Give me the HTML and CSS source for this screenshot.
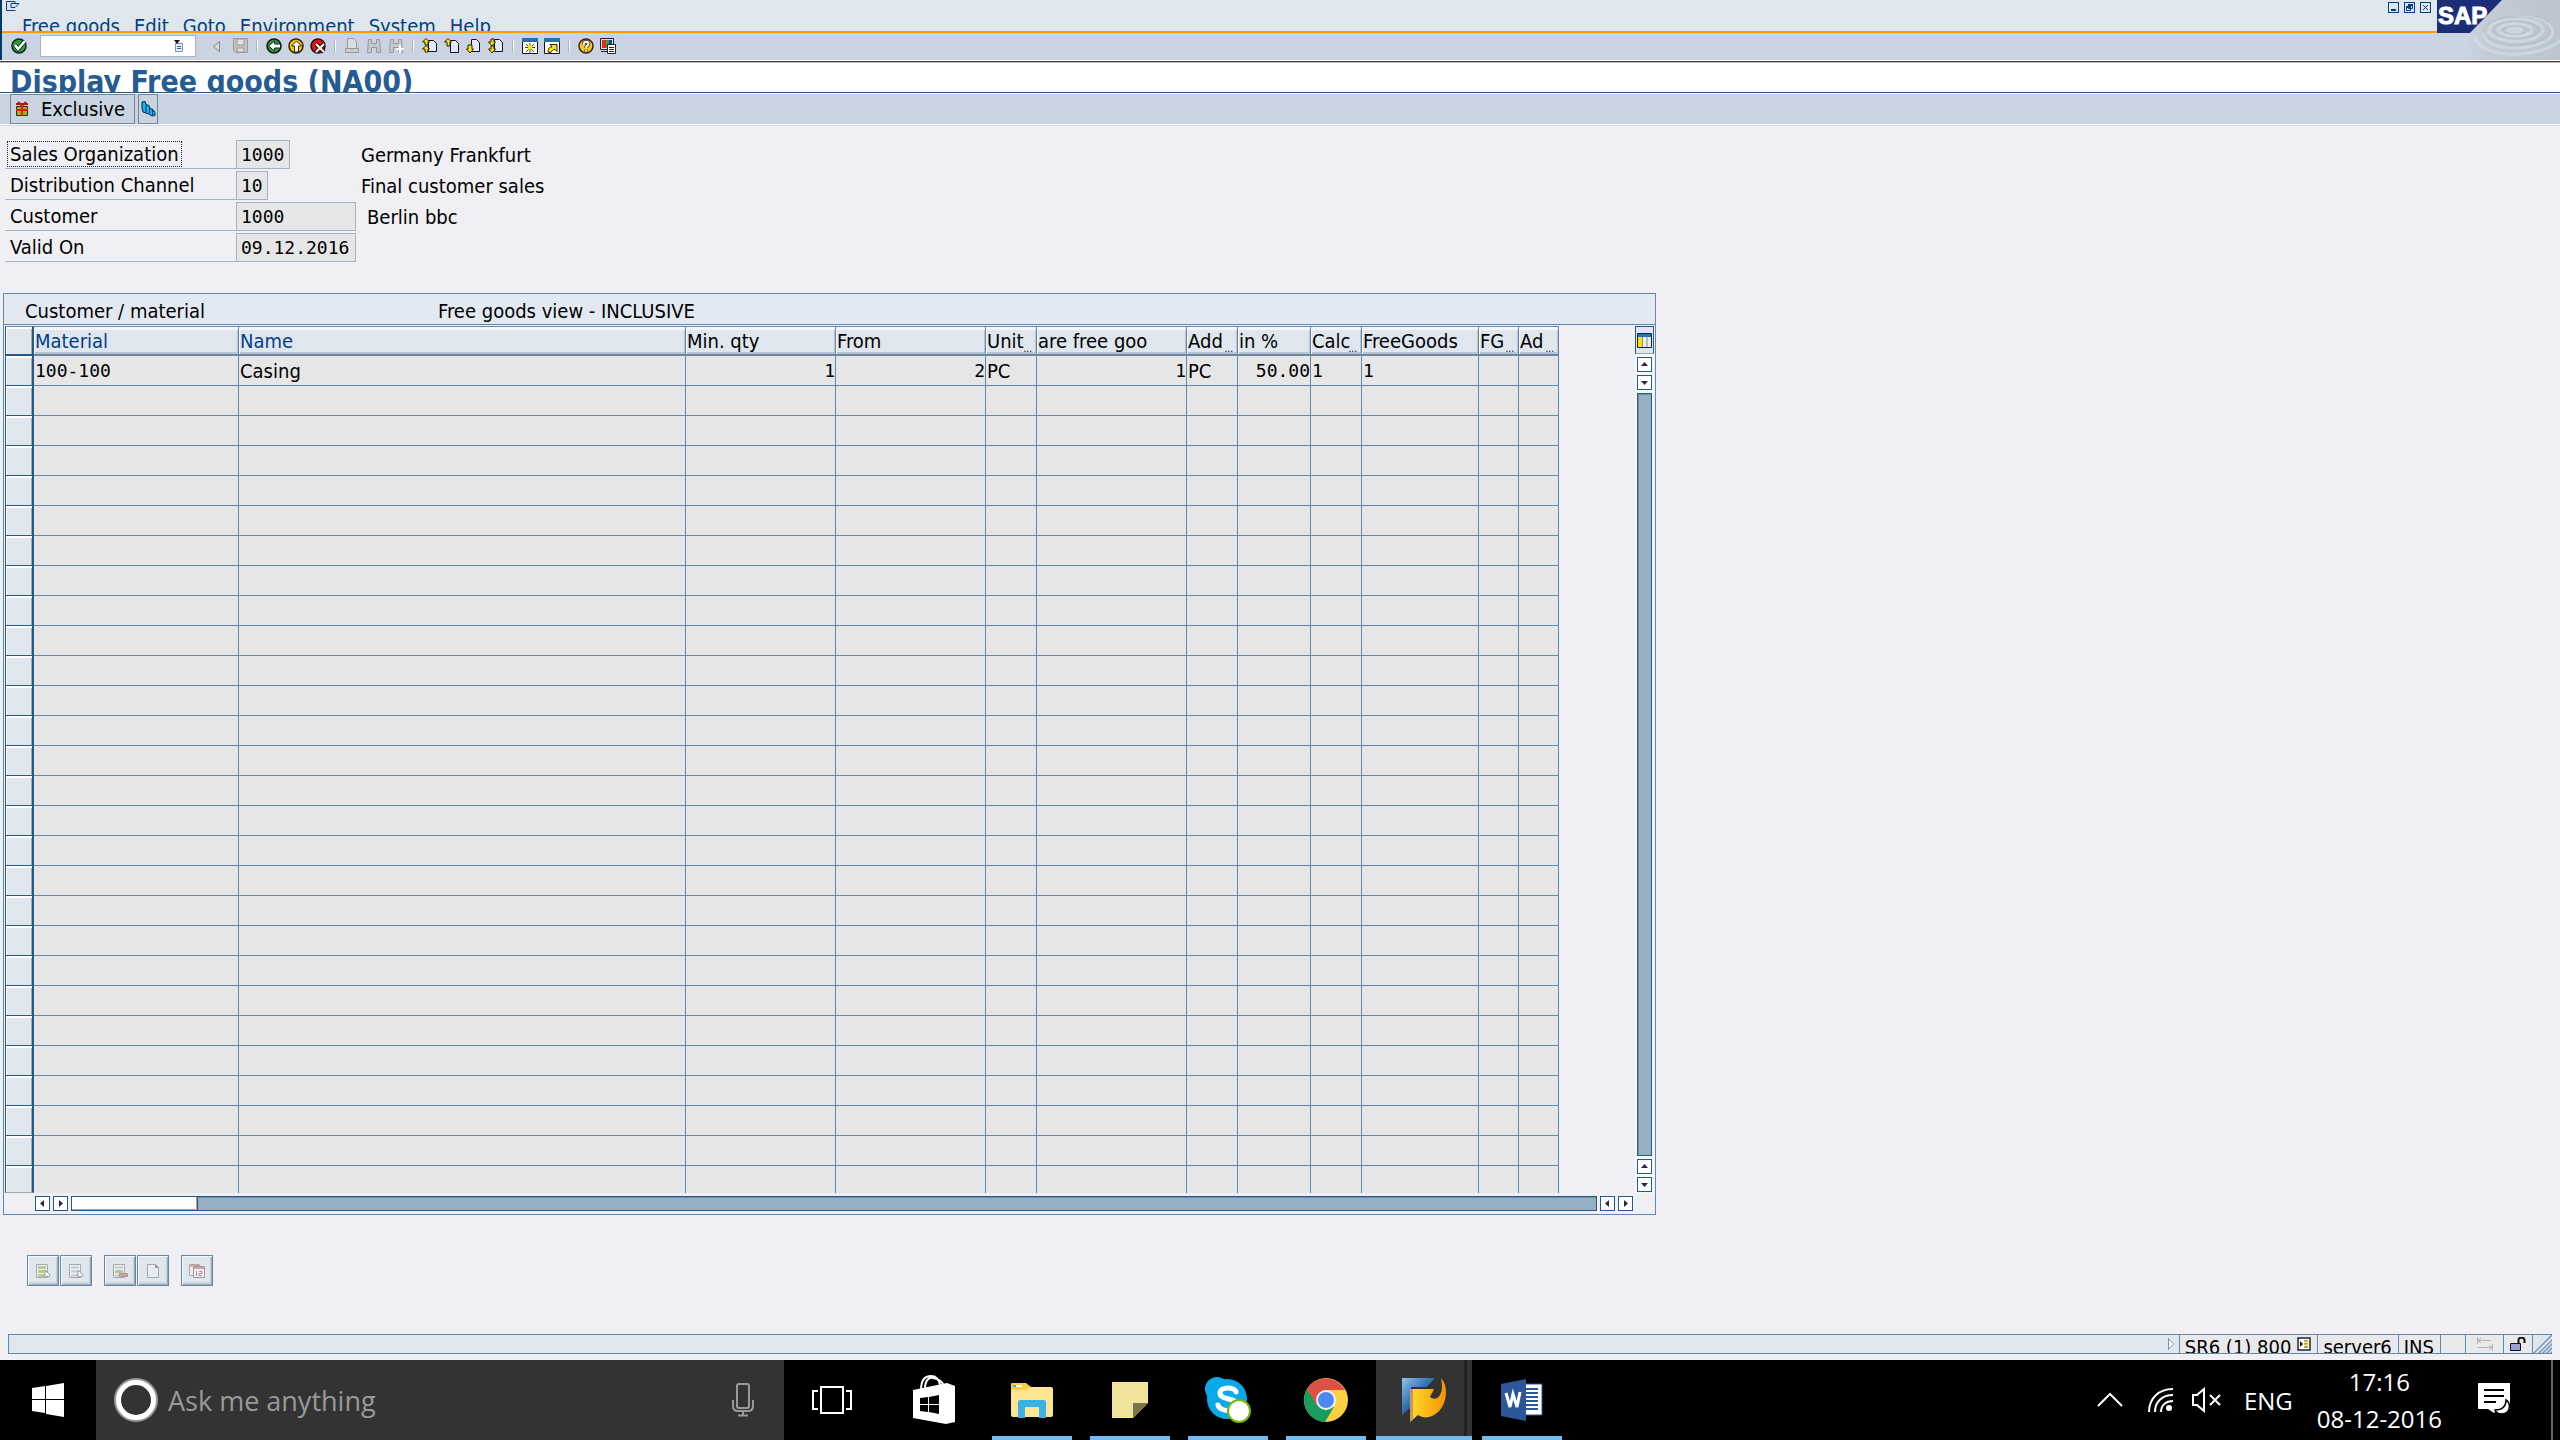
FILE: index.html
```html
<!DOCTYPE html>
<html lang="en">
<head>
<meta charset="utf-8">
<title>Display Free goods (NA00)</title>
<link rel="stylesheet" href="styles.css">
</head>
<body>
<header class="top">
  <div class="top-bars">
    <div class="menubar">
      <div class="window-row">
        <svg class="sysmenu" width="16" height="12" viewBox="0 0 16 12"><path d="M9 1.5H.5v9h9M9 1.5v2h4L9 7.500H5v-4h4" fill="none" stroke="#00408a"/></svg>
        <div class="window-buttons">
          <button aria-label="Minimize"><svg width="9" height="9"><path d="M2 7h5" stroke="#00408a" stroke-width="2"/></svg></button>
          <button aria-label="Restore"><svg width="9" height="9"><path d="M3.500 1.500h4v4h-4zM1.500 3.500h4v4h-4z" fill="none" stroke="#00408a"/><path d="M3 2h5M1 4h5" stroke="#00408a" stroke-width="2"/></svg></button>
          <button aria-label="Close"><svg width="9" height="9"><path d="M2 2l5 5M7 2L2 7" stroke="#00408a"/></svg></button>
        </div>
      </div>
      <nav class="menu"><a href="#">Free goods</a><a href="#">Edit</a><a href="#">Goto</a><a href="#">Environment</a><a href="#">System</a><a href="#">Help</a></nav>
    </div>
    <div class="toolbar">
      <button class="tool enter" aria-label="Enter"><svg width="16" height="16"><circle cx="8" cy="8" r="7" fill="#2f9e2f" stroke="#123" stroke-width="1.500"/><path d="M4 7l3 4 7-8" fill="none" stroke="#123" stroke-width="4"/><path d="M4 7l3 4 7-8" fill="none" stroke="#fff" stroke-width="2.500"/></svg></button>
      <div class="command"><input aria-label="Command field" type="text"><svg width="10" height="12" viewBox="0 0 10 12"><path d="M1.500 3.500h7v8h-7z" fill="#e8f1fb" stroke="#7b93b3"/><path d="M0 0h6L3 4z" fill="#111"/><path d="M3 6.500h4M3 8.500h4" stroke="#35618f"/></svg></div>
      <button class="tool back" aria-label="Previous"><svg width="9" height="13"><path d="M7.500 1.500v10L1.500 6.500z" fill="#ddd" stroke="#888"/></svg></button>
      <button class="tool save" aria-label="Save"><svg width="15" height="16"><path d="M.5.5h14v14h-12l-2-2z" fill="#c3c5bd" stroke="#999"/><path d="M4 1h7v6H4zM4 10h7v4H4z" fill="#dde3e8" stroke="#999"/></svg></button>
      <i class="sep"></i>
      <button class="tool" aria-label="Back"><svg width="16" height="16"><circle cx="8" cy="8" r="7" fill="#2c9c2c" stroke="#112" stroke-width="1.500"/><path d="M2.500 8l6-5v3h6v4h-6v3z" fill="#fff" stroke="#123"/></svg></button>
      <button class="tool" aria-label="Exit"><svg width="16" height="16"><circle cx="8" cy="8" r="7" fill="#ffc80a" stroke="#221" stroke-width="1.500"/><path d="M8.500 3l5 5h-3v6h-4V8h-3z" fill="#fff" stroke="#321"/></svg></button>
      <button class="tool" aria-label="Cancel"><svg width="16" height="16"><circle cx="8" cy="8" r="7" fill="#df1111" stroke="#211" stroke-width="1.500"/><path d="M6 6l8 8M14 6l-8 8" stroke="#311" stroke-width="4"/><path d="M6 6l8 8M14 6l-8 8" stroke="#fff" stroke-width="2"/></svg></button>
      <i class="sep"></i>
      <button class="tool" aria-label="Print"><svg width="16" height="16"><path d="M3.500 10V.5h6l3 3V10" fill="#d8dee6" stroke="#999"/><path d="M1.500 10.500h13v4h-13z" fill="#c6ccd2" stroke="#999"/></svg></button>
      <button class="tool" aria-label="Find"><svg width="16" height="16"><path d="M2.500 1.500h3v4h5v-4h3l1 13h-4v-5h-5v5h-4z" fill="#c3c9cf" stroke="#999"/></svg></button>
      <button class="tool" aria-label="Find next"><svg width="16" height="16"><path d="M2.500 1.500h3v4h5v-4h3l1 13h-4v-5h-5v5h-4z" fill="#c3c9cf" stroke="#999"/><path d="M12 7v8M8 11h8" stroke="#fff" stroke-width="2"/></svg></button>
      <i class="sep"></i>
      <button class="tool" aria-label="First page"><svg width="16" height="16"><path d="M6.500 2.500h5l3 3v8h-8z" fill="#e3e9fa" stroke="#112"/><path d="M4 .5l3.500 3.500H6v3H3V4H.5zM4 7.500L7.500 11H6v3H3v-3H.5z" fill="#ffe600" stroke="#221"/></svg></button>
      <button class="tool" aria-label="Previous page"><svg width="16" height="16"><path d="M6.500 2.500h5l3 3v9h-8z" fill="#e3e9fa" stroke="#112"/><path d="M4 .5L7.500 4H6v4H3V4H.5z" fill="#ffe600" stroke="#221"/></svg></button>
      <button class="tool" aria-label="Next page"><svg width="16" height="16"><path d="M5.500 1.500h5l3 3v9h-8z" fill="#e3e9fa" stroke="#112"/><path d="M4 15L.5 11H2V7h4v4h1.500z" fill="#ffe600" stroke="#221"/></svg></button>
      <button class="tool" aria-label="Last page"><svg width="16" height="16"><path d="M6.500 1.500h5l3 3v9h-8z" fill="#e3e9fa" stroke="#112"/><path d="M4 8L.5 4H3V1h3v3h1.500zM4 15L.5 11H3V8h3v3h1.500z" fill="#ffe600" stroke="#221"/></svg></button>
      <i class="sep"></i>
      <button class="tool" aria-label="New session"><svg width="16" height="16"><path d="M.5.500h15v15H.5z" fill="#fdfdf0" stroke="#112"/><path d="M0 0h16v4H0z" fill="#2d6ca8"/><path d="M8 5v10M3 9.500h10M4 6l8 8M12 6l-8 8" stroke="#443"/><path d="M6 7.500h4v4H6z" fill="#ffe600"/></svg></button>
      <button class="tool" aria-label="Shortcut"><svg width="16" height="16"><path d="M.5.500h15v15H.5z" fill="#fdfdf0" stroke="#112"/><path d="M0 0h16v4H0z" fill="#2d6ca8"/><path d="M4 14c0-4 2-5 4-5L6 6.500h7v7l-2-2c-2 0-3 1-4 3z" fill="#ffe600" stroke="#221"/></svg></button>
      <i class="sep"></i>
      <button class="tool" aria-label="Help"><svg width="16" height="16"><circle cx="8" cy="8" r="7" fill="#ffc81e" stroke="#321" stroke-width="1.500"/><path d="M5.500 7c0-4 5-4 5-1.500S8 8 8 10M8 11.500v2" fill="none" stroke="#321" stroke-width="3.500"/><path d="M5.500 7c0-4 5-4 5-1.500S8 8 8 10M8 11.500v2" fill="none" stroke="#fff" stroke-width="2"/></svg></button>
      <button class="tool" aria-label="Customize layout"><svg width="16" height="16"><path d="M.5.500h13v11H.5z" fill="#ddd" stroke="#222"/><path d="M2 2h4v8H2z" fill="#e22"/><path d="M6 2h3v8H6z" fill="#1b1"/><path d="M9 2h3v8H9z" fill="#23c"/><path d="M7.500 6.500h8v9h-8z" fill="#fff" stroke="#222"/><path d="M9 9.500h5M9 11.500h5M9 13.500h5M1 13.500h6" stroke="#222"/></svg></button>
    </div>
  </div>
  <svg class="brand" width="123" height="60" viewBox="0 0 123 60" role="img" aria-label="SAP">
    <defs>
      <linearGradient id="water" x1="0" x2="1"><stop offset="0" stop-color="#cad4e0"/><stop offset=".3" stop-color="#c2cad4"/><stop offset="1" stop-color="#bcc4ce"/></linearGradient>
    </defs>
    <path d="M0 33h123v27H0z" fill="#cad4e0"/>
    <path d="M65 0h58v60H28L33 33z" fill="url(#water)"/>
    <g fill="none" stroke="#d0dbe6" stroke-width="3" opacity=".8">
      <ellipse cx="78" cy="30" rx="7" ry="2"/><ellipse cx="78" cy="30" rx="17" ry="6"/><ellipse cx="79" cy="30" rx="27" ry="11"/>
      <path d="M47 33c1 10 12 15 29 15 20 0 38-6 40-15 0-9-14-16-36-16M38 38c5 13 24 17 44 16 17-1 32-6 41-13"/>
    </g>
    <g fill="none" stroke="#b1bac5" stroke-width="1" opacity=".8"><ellipse cx="78" cy="30" rx="12" ry="4"/><ellipse cx="79" cy="30" rx="22" ry="9"/><ellipse cx="80" cy="31" rx="33" ry="14"/></g>
    <path d="M0 0h65L33 33H0z" fill="#1c2d78"/>
    <text class="brand-text" x="1" y="24">SAP</text>
  </svg>
</header>
<div class="titlebar"><h1>Display Free goods (NA00)</h1></div>
<div class="appbar">
  <button class="app-button exclusive"><svg width="14" height="16" viewBox="0 0 14 16"><path d="M3 1l3 3M11 1L8 4M1 3h12" stroke="#b0151b" stroke-width="2"/><path d="M1.500 5.500h11v9h-11z" fill="#9cb510" stroke="#330"/><path d="M7 4v11M1 9h12" stroke="#e01818" stroke-width="2"/></svg><span>Exclusive</span></button>
  <button class="app-button stairs" aria-label="Scale"><svg width="15" height="16" viewBox="0 0 15 16"><path d="M1 1l3-.5 1 3 3 1 1 3 3 1 2 3v3l-3 .5-3-2-3-1-3-1-1-4z" fill="#19b5f1" stroke="#024"/><path d="M5 4v7M8.500 6v6M11.500 9v5" stroke="#013b6b"/></svg></button>
</div>
<main class="content">
  <form class="fields">
    <div class="field"><label class="current" for="org"><span>Sales Organization</span></label><input class="w-org" id="org" value="1000" readonly><output class="desc" for="org">Germany Frankfurt</output></div>
    <div class="field"><label for="chan"><span>Distribution Channel</span></label><input class="w-chan" id="chan" value="10" readonly><output class="desc" for="chan">Final customer sales</output></div>
    <div class="field"><label for="cust"><span>Customer</span></label><input class="w-long" id="cust" value="1000" readonly><output class="near" for="cust">Berlin bbc</output></div>
    <div class="field"><label for="valid"><span>Valid On</span></label><input class="w-long" id="valid" value="09.12.2016" readonly></div>
  </form>
  <section class="panel">
    <div class="panel-title"><span class="panel-name">Customer / material</span><span>Free goods view - INCLUSIVE</span></div>
    <div class="panel-body">
      <div class="table-area">
        <table class="grid">
          <colgroup><col class="c-sel"><col class="c-material"><col class="c-name"><col class="c-qty"><col class="c-qty"><col class="c-unit"><col class="c-qty"><col class="c-unit"><col class="c-pct"><col class="c-unit"><col class="c-goods"><col class="c-flag"><col class="c-flag"></colgroup>
          <thead><tr><th class="sel"></th><th class="key">Material</th><th class="key">Name</th><th>Min. qty</th><th>From</th><th class="cut">Unit</th><th>are free goo</th><th class="cut">Add</th><th>in %</th><th class="cut">Calc</th><th>FreeGoods</th><th class="cut">FG</th><th class="cut">Ad</th></tr></thead>
          <tbody>
            <tr><td class="sel"></td><td class="mono">100-100</td><td>Casing</td><td class="mono num">1</td><td class="mono num">2</td><td>PC</td><td class="mono num">1</td><td>PC</td><td class="mono num">50.00</td><td class="mono">1</td><td class="mono">1</td><td></td><td></td></tr>
            <tr><td class="sel"><td><td><td><td><td><td><td><td><td><td><td><td>
            <tr><td class="sel"><td><td><td><td><td><td><td><td><td><td><td><td>
            <tr><td class="sel"><td><td><td><td><td><td><td><td><td><td><td><td>
            <tr><td class="sel"><td><td><td><td><td><td><td><td><td><td><td><td>
            <tr><td class="sel"><td><td><td><td><td><td><td><td><td><td><td><td>
            <tr><td class="sel"><td><td><td><td><td><td><td><td><td><td><td><td>
            <tr><td class="sel"><td><td><td><td><td><td><td><td><td><td><td><td>
            <tr><td class="sel"><td><td><td><td><td><td><td><td><td><td><td><td>
            <tr><td class="sel"><td><td><td><td><td><td><td><td><td><td><td><td>
            <tr><td class="sel"><td><td><td><td><td><td><td><td><td><td><td><td>
            <tr><td class="sel"><td><td><td><td><td><td><td><td><td><td><td><td>
            <tr><td class="sel"><td><td><td><td><td><td><td><td><td><td><td><td>
            <tr><td class="sel"><td><td><td><td><td><td><td><td><td><td><td><td>
            <tr><td class="sel"><td><td><td><td><td><td><td><td><td><td><td><td>
            <tr><td class="sel"><td><td><td><td><td><td><td><td><td><td><td><td>
            <tr><td class="sel"><td><td><td><td><td><td><td><td><td><td><td><td>
            <tr><td class="sel"><td><td><td><td><td><td><td><td><td><td><td><td>
            <tr><td class="sel"><td><td><td><td><td><td><td><td><td><td><td><td>
            <tr><td class="sel"><td><td><td><td><td><td><td><td><td><td><td><td>
            <tr><td class="sel"><td><td><td><td><td><td><td><td><td><td><td><td>
            <tr><td class="sel"><td><td><td><td><td><td><td><td><td><td><td><td>
            <tr><td class="sel"><td><td><td><td><td><td><td><td><td><td><td><td>
            <tr><td class="sel"><td><td><td><td><td><td><td><td><td><td><td><td>
            <tr><td class="sel"><td><td><td><td><td><td><td><td><td><td><td><td>
            <tr><td class="sel"><td><td><td><td><td><td><td><td><td><td><td><td>
            <tr><td class="sel"><td><td><td><td><td><td><td><td><td><td><td><td>
            <tr class="last"><td class="sel"><td><td><td><td><td><td><td><td><td><td><td><td>
          </tbody>
        </table>
      </div>
      <div class="vscroll">
        <button class="config" aria-label="Configuration"><svg width="15" height="15"><path d="M.5.500h14v14H.5z" fill="#e8edf4" stroke="#123"/><path d="M1 1h13v3H1z" fill="#1c78bd"/><path d="M1 4h4v10H1z" fill="#ffe000"/><path d="M5.500 4v10M10 4v10" stroke="#889"/></svg></button>
        <button class="arrow" aria-label="Scroll up"><svg width="13" height="13"><path d="M3 8h7L6.500 4z" fill="#26264a"/></svg></button>
        <button class="arrow" aria-label="Scroll down"><svg width="13" height="13"><path d="M3 5h7L6.500 9z" fill="#26264a"/></svg></button>
        <div class="track"></div>
        <button class="arrow" aria-label="Page up"><svg width="13" height="13"><path d="M3 8h7L6.500 4z" fill="#26264a"/></svg></button>
        <button class="arrow" aria-label="Page down"><svg width="13" height="13"><path d="M3 5h7L6.500 9z" fill="#26264a"/></svg></button>
      </div>
    </div>
    <div class="hscroll">
      <button class="arrow" aria-label="Scroll left"><svg width="13" height="13"><path d="M8 3v7L4 6.500z" fill="#26264a"/></svg></button>
      <button class="arrow" aria-label="Scroll right"><svg width="13" height="13"><path d="M5 3v7l4-3.500z" fill="#26264a"/></svg></button>
      <div class="htrack"><div class="thumb"></div></div>
      <button class="arrow" aria-label="Page left"><svg width="13" height="13"><path d="M8 3v7L4 6.500z" fill="#26264a"/></svg></button>
      <button class="arrow" aria-label="Page right"><svg width="13" height="13"><path d="M5 3v7l4-3.500z" fill="#26264a"/></svg></button>
    </div>
  </section>
  <div class="actions">
    <div class="group">
      <button aria-label="Select all" disabled><svg width="16" height="16"><path d="M1.500 1.500h11v13h-11z" fill="#eef1f3" stroke="#a8a8a8"/><path d="M3 4.500h8M3 8.500h8M3 12.500h8" stroke="#b9cb8a" stroke-width="3"/><path d="M10 7v8l2-2 2 1 1-2z" fill="#fff" stroke="#999"/></svg></button>
      <button aria-label="Deselect all" disabled><svg width="16" height="16"><path d="M1.500 1.500h11v13h-11z" fill="#eef1f3" stroke="#a8a8a8"/><path d="M3 4.500h8M3 8.500h8M3 12.500h8" stroke="#bcc6dc" stroke-width="2"/><path d="M10 7v8l2-2 2 1 1-2z" fill="#fff" stroke="#999"/></svg></button>
    </div>
    <div class="group">
      <button aria-label="Delete row" disabled><svg width="16" height="16"><path d="M1.500 1.500h11v13h-11z" fill="#eef1f3" stroke="#a8a8a8"/><path d="M3 4.500h8M3 12.500h8" stroke="#bcc6dc" stroke-width="2"/><path d="M3 8.500h8" stroke="#b9cb8a" stroke-width="3"/><path d="M7.500 10.500h8v3h-8z" fill="#e39ba0" stroke="#999"/></svg></button>
      <button aria-label="Insert row" disabled><svg width="16" height="16"><path d="M2.500 1.500h8l3 3v10h-11z" fill="#e6edf2" stroke="#a8a8a8"/><path d="M10 1v4h4z" fill="#999"/></svg></button>
    </div>
    <div class="group">
      <button aria-label="Validity periods" disabled><svg width="16" height="16"><path d="M.5 1.500h10v11H.5z" fill="#eee" stroke="#aaa"/><path d="M1 2.500h9" stroke="#c9a0a4" stroke-width="2"/><path d="M4.500 3.500h11v11h-11z" fill="#f0f0f2" stroke="#999"/><path d="M5 5h10" stroke="#d3a0aa" stroke-width="2"/><path d="M7.500 8v5M10 8.500h3v2h-3v2h3" fill="none" stroke="#b98a8e"/></svg></button>
    </div>
  </div>
</main>
<footer class="status">
  <div class="status-message"></div>
  <svg class="status-open" width="8" height="14"><path d="M1.500 1.500v11l5-5.500z" fill="#fff" stroke="#6f93b5"/></svg>
  <div class="cell"><span>SR6 (1) 800</span><svg width="14" height="14"><path d="M1 1h12v12H1z" fill="#fff" stroke="#223" stroke-width="1.500"/><path d="M3 4v6l3-3z" fill="#111"/><path d="M7 4h4M7 7h4M7 10h4" stroke="#554a00"/><path d="M7 5h4M7 8h4" stroke="#ffe600"/></svg></div>
  <div class="cell"><span>server6</span></div>
  <div class="cell"><span>INS</span></div>
  <div class="cell blank"></div>
  <div class="cell wide"><svg width="18" height="14"><path d="M1.500 0v7M1 3.500h14M16.500 7v7M2 10.500h14M5 1L2 3.500 5 6M13 8l3 2.500-3 2.500" fill="none" stroke="#b3b3b3"/></svg></div>
  <div class="cell lock"><svg width="17" height="16"><path d="M1.500 6.500h10v7h-10z" fill="#9d9dd0" stroke="#111"/><path d="M9.500 6V3c0-3 6-3 6 0v3" fill="none" stroke="#111" stroke-width="2"/></svg></div>
  <svg class="resize" width="20" height="19"><path d="M0 19L19 0M5 19L20 4M9 19L20 8M13 19l7-7M17 19l3-3" stroke="#7797b6" stroke-width="1.500"/></svg>
</footer>
<div class="taskbar">
  <button class="start" aria-label="Start"><svg width="32" height="34" viewBox="0 0 32 34"><path d="M0 5l13-2v13H0zM14 3l18-3v16H14zM0 17h13v13L0 28zM14 17h18v17l-18-3z" fill="#fff"/></svg></button>
  <div class="search"><svg width="44" height="44" viewBox="0 0 44 44"><circle cx="22" cy="22" r="20" fill="none" stroke="#999" stroke-width="4"/><circle cx="22" cy="22" r="17.500" fill="none" stroke="#fff" stroke-width="5"/></svg><input type="text" aria-label="Search" placeholder="Ask me anything"><svg width="22" height="34" viewBox="0 0 22 34" fill="none" stroke="#999" stroke-width="2"><rect x="5" y="1" width="12" height="24" rx="2"/><path d="M1 17v6c0 3 2 5 5 5h10c3 0 5-2 5-5v-6M11 28v4M6 32.500h10"/></svg></div>
  <button class="task idle first" aria-label="Task view"><svg width="40" height="28" viewBox="0 0 40 28" fill="none" stroke="#fff" stroke-width="2"><path d="M9 1h22v26H9zM6 5H1v18h5M34 5h5v18h-5"/></svg></button>
  <button class="task idle store" aria-label="Store"><svg width="42" height="50" viewBox="0 0 42 50"><path d="M8 15C8 5 12 1 18 1s8 4 9 9M12 14c0-9 4-12 8-11 6 1 10 3 11 9" fill="none" stroke="#fff" stroke-width="2"/><path d="M0 15l34-7 8 3v36l-9 2L0 43z" fill="#fff"/><path d="M7 23l8-1v7H7zM16 22l10-2v9H16zM7 30h8v7l-8-1zM16 30h10v9l-10-2z" fill="#000"/></svg></button>
  <button class="task" aria-label="File Explorer"><svg width="42" height="35" viewBox="0 0 42 35"><path d="M0 4h40q2 0 2 2v26q0 2-2 2H2q-2 0-2-2z" fill="#ffe592"/><path d="M0 1q0-1 1-1h14l5 4-5 3H0z" fill="#ffce45"/><path d="M2 2h9v2H2z" fill="#fff"/><path d="M2 2h3v2H2z" fill="#3ab2e8"/><path d="M7 19q0-2 2-2h24q2 0 2 2v16h-7V24H14v11H7z" fill="#3ab2e8"/></svg></button>
  <button class="task" aria-label="Sticky Notes"><svg width="36" height="36"><path d="M0 0h36v21L21 36H0z" fill="#f0e49a"/><path d="M21 21h15L21 36z" fill="#7a744b"/></svg></button>
  <button class="task" aria-label="Skype"><svg width="46" height="48" viewBox="0 0 46 48"><circle cx="12" cy="13" r="12" fill="#0aaaea"/><circle cx="22" cy="23" r="20" fill="#0aaaea"/><circle cx="32" cy="33" r="11" fill="#0aaaea"/><path d="M31 16c-1-5-16-6-16 1 0 8 17 4 17 12 0 8-17 7-19 0" fill="none" stroke="#fff" stroke-width="5" stroke-linecap="round"/><circle cx="34" cy="35" r="11" fill="#fff" stroke="#72b80b" stroke-width="2"/></svg></button>
  <button class="task" aria-label="Chrome"><svg width="44" height="44" viewBox="0 0 44 44"><circle cx="22" cy="22" r="22" fill="#fecf40"/><path d="M22 22l-5 8L3 11a22 22 0 0 0 18 33l9-15z" fill="#179e5c"/><path d="M3 11l10 17 4-11 5-5h19A22 22 0 0 0 3 11z" fill="#db5144"/><circle cx="22" cy="22" r="10" fill="#f1f1f1"/><circle cx="22" cy="22" r="8" fill="#4d88f2"/></svg></button>
  <button class="task active" aria-label="SAP Logon"><svg width="46" height="46" viewBox="0 0 46 46"><defs><linearGradient id="blue" x2="1" y2="1"><stop offset="0" stop-color="#8fc2ee"/><stop offset=".5" stop-color="#2a6aa8"/><stop offset="1" stop-color="#0d3764"/></linearGradient><linearGradient id="gold" x2="1"><stop offset="0" stop-color="#ffdc2a"/><stop offset="1" stop-color="#f59200"/></linearGradient></defs><path d="M1 1h33l-8 9H10v20l-9 8z" fill="url(#blue)"/><path d="M9 12h24l-4 8c6 5 15-1 11-19 8 8 6 26-3 34-6 6-14 7-20 3l-8 7z" fill="url(#gold)"/><path d="M9 12h3v30l-3 3z" fill="#c69a5c"/></svg></button>
  <button class="task" aria-label="Word"><svg width="42" height="42" viewBox="0 0 42 42"><path d="M24 5h17v31H24z" fill="#fff" stroke="#2b579a"/><path d="M25 10h12M25 14h12M25 18h12M25 22h12M25 26h12M25 30h12" stroke="#2b579a" stroke-width="2"/><path d="M0 5l25-5v42L0 37z" fill="#2b579a"/><path d="M5 14l4 14 3-13 4 13 3-15" fill="none" stroke="#fff" stroke-width="3"/></svg></button>
  <div class="tray">
    <svg width="26" height="16"><path d="M1 14L13 2l12 12" fill="none" stroke="#fff" stroke-width="2"/></svg>
    <svg class="wifi" width="26" height="26" viewBox="0 0 26 26" fill="none" stroke="#fff" stroke-width="2"><path d="M1 25C1 11 11 2 25 2M7 25C7 15 14 8 25 8M13 25c0-7 5-11 12-11"/><circle cx="21" cy="21" r="3" fill="#fff" stroke="none"/></svg>
    <svg width="30" height="26" viewBox="0 0 30 26" fill="none" stroke="#fff" stroke-width="2"><path d="M1 8h4l7-6v22l-7-6H1zM18 8l10 10M28 8L18 18"/></svg>
    <span class="lang">ENG</span>
    <time class="clock"><span>17:16</span><span>08-12-2016</span></time>
    <svg class="notes" width="34" height="34" viewBox="0 0 34 34"><path d="M0 0h32v26H20l-4 4-6-4H0z" fill="#fff"/><path d="M6 7h20M6 13h20M6 19h12" stroke="#000" stroke-width="2"/><path d="M28 17c5 3 5 13-4 14-3 0-6-1-7-4 8 0 11-4 11-10z" fill="#fff" stroke="#000" stroke-width="1.500"/></svg>
  </div>
</div>
</body>
</html>
```
FILE: styles.css
```css
* { box-sizing: border-box; }
:root {
  --ui: "DejaVu Sans Condensed", "Open Sans", sans-serif;
  --mono: "DejaVu Sans Mono", "Liberation Mono", monospace;
  --line: #6189ad;
  --dark: #24598c;
  --bar: #cad4e0;
  --pale: #dfe6ee;
}
body {
  margin: 0;
  min-height: 100vh;
  display: flex;
  flex-direction: column;
  background: #efeff4;
  color: #000;
  font: 20px/24px var(--ui);
}
button, input { font: inherit; color: inherit; padding: 0; margin: 0; border: 0; border-radius: 0; background: none; }
button { display: flex; align-items: center; justify-content: center; }
svg { display: block; flex: none; }
a { color: inherit; text-decoration: none; }

.top { display: flex; border-bottom: 1px solid #fff; }
.top-bars { flex: 1; border-left: 2px solid #003a6c; }
.menubar { height: 33px; background: var(--pale); border-bottom: 2px solid #ff9a00; overflow: hidden; }
.window-row { display: flex; justify-content: space-between; height: 13px; padding: 0 6px 0 4px; }
.window-buttons { display: flex; gap: 5px; padding-top: 2px; }
.window-buttons button { width: 11px; height: 11px; border: 1px solid #00408a; }
.menu { display: flex; gap: 14px; height: 18px; padding-left: 20px; overflow: hidden; line-height: 26px; color: #003f88; }
.toolbar { display: flex; align-items: center; gap: 6px; height: 27px; padding: 0 0 1px 9px; background: var(--bar); }
.tool { width: 16px; }
.enter { margin-right: 7px; }
.back { width: 9px; margin: 0 5px 0 10px; }
.command { display: flex; align-items: center; width: 156px; height: 22px; padding-right: 11px; background: #fff; border: 1px solid #a3b2c4; }
.command input { flex: 1; min-width: 0; height: 20px; outline: none; }
.sep { width: 2px; height: 12px; margin: 0 2px; background: #a9b3bf; border-right: 1px solid #fff; }
.brand-text { font: bold 24px "Liberation Sans", sans-serif; fill: #fff; stroke: #fff; stroke-width: 1px; }

.titlebar { height: 32px; padding-left: 10px; background: #fff; border-top: 1px solid #403c40; border-bottom: 1px solid var(--dark); box-shadow: inset 0 1px #bbb; overflow: hidden; }
.titlebar h1 { margin: 0; font: bold 30px/40px var(--ui); color: #265c91; }
.appbar { display: flex; gap: 3px; height: 32px; padding-left: 10px; background: var(--bar); border-top: 1px solid #fff; border-bottom: 1px solid #fff; box-shadow: 0 1px #cdd6e2; }
.app-button { height: 30px; border: 1px solid #6b8796; }
.exclusive { width: 125px; gap: 12px; justify-content: flex-start; padding-left: 4px; }
.stairs { width: 20px; }

.content { flex: 1; padding: 15px 0 0 3px; }
.fields { display: flex; flex-direction: column; gap: 2px; padding-left: 2px; }
.field { display: flex; align-items: center; height: 29px; }
.field label { display: flex; align-items: center; width: 231px; height: 29px; padding-left: 3px; border-bottom: 1px solid #a3b2c4; }
.field label span { padding: 0 2px; }
.field .current span { outline: 1px dotted #223; }
.field input { height: 29px; padding-left: 4px; background: #e6e6e6; border: 1px solid #a3b2c4; font: 18px/24px var(--mono); outline: none; }
.w-org { width: 54px; }
.w-chan { width: 32px; }
.w-long { width: 120px; }
.w-org + .desc { margin-left: 71px; }
.w-chan + .desc { margin-left: 93px; }
.near { margin-left: 11px; }

.panel { width: 1653px; margin-top: 31px; border: 1px solid var(--line); }
.panel-title { display: flex; height: 31px; padding: 5px 0 0 21px; background: #e3e9f2; border-bottom: 1px solid var(--line); }
.panel-name { width: 413px; }
.panel-body { display: flex; justify-content: space-between; padding: 1px 1px 0 1px; }
.grid { table-layout: fixed; width: 1554px; border-collapse: separate; border-spacing: 0; }
.c-sel { width: 29px; }
.c-material { width: 205px; }
.c-name { width: 447px; }
.c-qty { width: 150px; }
.c-unit { width: 51px; }
.c-pct { width: 73px; }
.c-goods { width: 117px; }
.c-flag { width: 40px; }
.grid th, .grid td { padding: 0 0 0 1px; height: 30px; border-right: 1px solid var(--line); border-bottom: 1px solid var(--line); background: #e6e6e6; font-weight: normal; text-align: left; white-space: nowrap; line-height: 24px; }
.grid th { background: var(--pale); border-top: 1px solid var(--line); border-bottom-width: 2px; box-shadow: inset 1px 3px #f3f6fa, inset -1px -2px #b9c4d0; }
.grid .key { color: #00408a; }
.grid .mono { font: 18px/24px var(--mono); }
.grid .num { text-align: right; padding: 0; }
.cut { position: relative; }
.cut::after { content: "..."; position: absolute; right: 4px; bottom: 0; font-size: 10px; line-height: 10px; }
.grid .sel { background: var(--pale); border-left: 1px solid var(--dark); border-right: 2px solid var(--dark); border-bottom-color: var(--dark); box-shadow: inset 1px 2px #fff, inset -1px 0 #a6a6a6; }
.grid .last td { height: 27px; border-bottom: 0; }
.grid .last .sel { border-bottom: 1px solid #a6a6a6; }
.vscroll { display: flex; flex-direction: column; align-items: center; gap: 3px; width: 19px; padding-bottom: 1px; background: #f6f7fb; }
.config { width: 19px; height: 28px; background: var(--pale); border: 1px solid var(--dark); border-bottom-color: #a6a6a6; }
.arrow { width: 15px; height: 15px; background: #fff; border: 1px solid var(--dark); }
.track { flex: 1; width: 15px; background: #95b0c3; border: 1px solid var(--dark); box-shadow: inset 1px 1px #7a8c99; }
.hscroll { display: flex; gap: 3px; width: 1598px; margin: 3px 0 3px 31px; }
.htrack { flex: 1; height: 15px; background: #95b0c3; border: 1px solid var(--dark); box-shadow: inset 0 1px #7a8c99; }
.thumb { width: 126px; height: 13px; background: #fff; border-right: 1px solid var(--dark); box-shadow: inset -1px -1px #a6a6a6; }

.actions { display: flex; gap: 12px; padding: 40px 0 0 24px; }
.group { display: flex; gap: 1px; }
.actions button { width: 32px; height: 31px; background: var(--pale); border: 1px solid var(--line); box-shadow: inset 1px 1px #f6f8fb, inset -1px -1px #a6a6a6, inset -2px -3px #c9d3df; }

.status { display: flex; height: 20px; margin: 0 8px 6px; background: var(--pale); border: 1px solid var(--line); border-right: 0; overflow: hidden; }
.status-message { flex: 1; }
.status-open { margin: 2px 4px; }
.cell { display: flex; gap: 6px; padding: 0 6px 0 5px; background: #e9e9ec; border-left: 1px solid var(--line); line-height: 25px; }
.cell svg { margin-top: 2px; }
.blank { width: 25px; }
.wide { width: 38px; padding-left: 10px; }
.lock { width: 29px; }
.resize { border-left: 1px solid var(--line); }

.taskbar { display: flex; align-items: center; height: 80px; background: #000; color: #fff; font: 24px/37px "Open Sans", "Noto Sans", sans-serif; }
.start { width: 96px; height: 80px; }
.search { display: flex; align-items: center; gap: 10px; width: 688px; height: 80px; padding: 0 30px 0 18px; background: #333; }
.search input { flex: 1; min-width: 0; height: 44px; font-size: 27px; outline: none; }
.search input::placeholder { color: #999; opacity: 1; }
.task { width: 80px; height: 80px; margin-left: 18px; padding-top: 4px; border-bottom: 4px solid #76b9ed; }
.idle { border-bottom-color: transparent; }
.first { margin-left: 8px; }
.store { margin-left: 22px; }
.active { width: 96px; margin: 0 -8px 0 10px; background: linear-gradient(90deg, #333 88px, #222 88px, #222 91px, #333 91px); }
.tray { display: flex; align-items: center; height: 80px; margin: 0 7px 0 auto; padding-right: 39px; border-right: 2px solid #666; }
.tray svg + svg { margin-left: 18px; }
.tray .wifi { margin-left: 25px; }
.lang { margin-left: 22px; }
.clock { display: flex; flex-direction: column; align-items: center; margin-left: 24px; }
.tray .notes { margin-left: 36px; }
```
